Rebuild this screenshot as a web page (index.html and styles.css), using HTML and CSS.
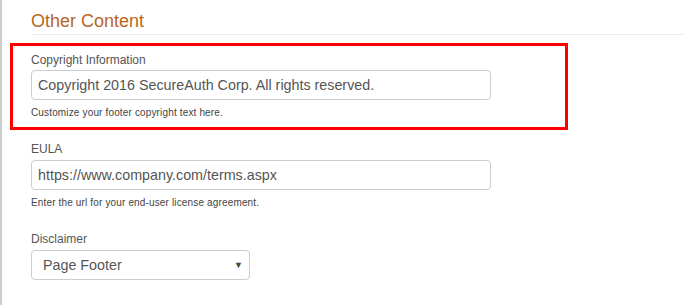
FILE: index.html
```html
<!DOCTYPE html>
<html lang="en">
<head>
  <meta charset="UTF-8">
  <title>Other Content</title>
  <link rel="stylesheet" href="styles.css">
</head>
<body>

<div class="panel">
  <h2 class="section-title">Other Content</h2>

  <div class="field highlight">
    <label for="copyright">Copyright Information</label>
    <input id="copyright" type="text" class="input wide" value="Copyright 2016 SecureAuth Corp. All rights reserved.">
    <p class="help">Customize your footer copyright text here.</p>
  </div>

  <div class="field">
    <label for="eula">EULA</label>
    <input id="eula" type="text" class="input wide" value="https://www.company.com/terms.aspx">
    <p class="help">Enter the url for your end-user license agreement.</p>
  </div>

  <div class="field last">
    <label for="disclaimer">Disclaimer</label>
    <div class="select-wrap">
      <select id="disclaimer" class="input">
        <option>Page Footer</option>
      </select>
      <span class="caret">&#9660;</span>
    </div>
  </div>
</div>

</body>
</html>
```

FILE: styles.css
```css
* {
  box-sizing: border-box;
  margin: 0;
  padding: 0;
}

body {
  font-family: 'Liberation Sans', Arial, sans-serif;
  background: #fff;
  color: #555;
  width: 693px;
  height: 305px;
  overflow: hidden;
}

.panel {
  border-left: 2px solid #ccc;
  height: 305px;
  padding: 10px 9px 0 29px;
}

.section-title {
  font-size: 18px;
  font-weight: normal;
  color: #b8661e;
  line-height: 22px;
  padding-bottom: 2px;
  border-bottom: 1px solid #eee;
}

.field {
  margin-top: 12px;
}

.highlight {
  width: 558px;
  margin-top: 8px;
  border: 3px solid #f00;
  margin-left: -21px;
  padding: 7px 0 8px 18px;
}

.last {
  margin-top: 23px;
}

.field label {
  display: block;
  font-size: 12px;
  line-height: 15px;
  margin-bottom: 3px;
  color: #555;
}

.highlight label {
  margin-bottom: 2px;
}

.input {
  display: block;
  height: 30px;
  border: 1px solid #ccc;
  border-radius: 4px;
  padding: 0 6px;
  font-family: 'Liberation Sans', Arial, sans-serif;
  font-size: 14.3px;
  color: #555;
  background: #fff;
}

.wide {
  width: 460px;
}

.help {
  font-size: 10px;
  color: #444;
  margin-top: 7px;
  line-height: 12px;
  letter-spacing: 0.15px;
}

.select-wrap {
  position: relative;
  width: 219px;
}

.select-wrap select {
  width: 100%;
  appearance: none;
  padding-left: 11px;
}

.caret {
  position: absolute;
  right: 7px;
  top: 10px;
  font-size: 9px;
  color: #444;
  pointer-events: none;
}
```
